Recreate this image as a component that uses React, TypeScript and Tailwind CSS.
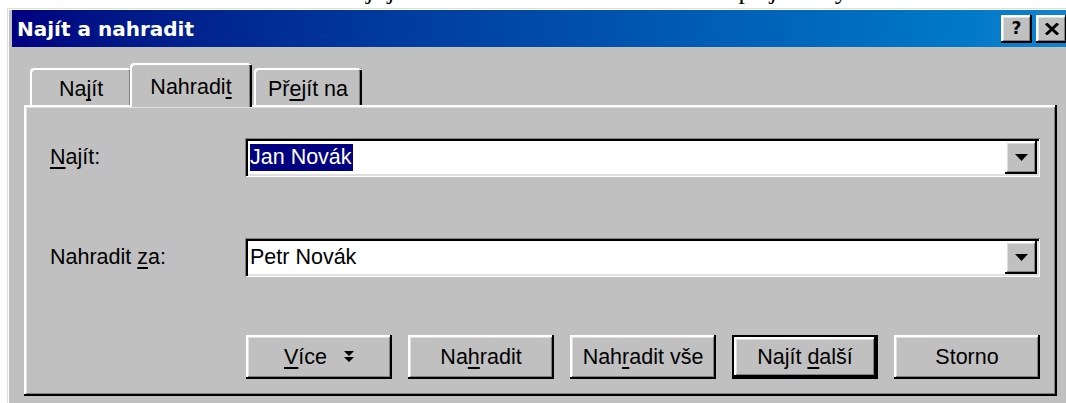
import React from "react";

// Win98-style bevels (scaled up, so edges are ~2px)
const raised =
  "shadow-[inset_-2px_-2px_#000,inset_2px_2px_#fff,inset_-3px_-3px_#808080,inset_3px_3px_#dfdfdf]";
const sunken =
  "shadow-[inset_1px_1px_#808080,inset_-1px_-1px_#fff,inset_3px_3px_#000,inset_-3px_-3px_#dfdfdf]";

function Key({ children }: { children: React.ReactNode }) {
  return (
    <u className="underline decoration-[1.5px] underline-offset-[3px] [text-decoration-skip-ink:none]">{children}</u>
  );
}

function Combo({ children }: { children: React.ReactNode }) {
  return (
    <div className={`flex w-[795px] h-[39px] bg-white p-[3px] ${sunken}`}>
      <div className="flex-1 flex items-center pl-[2px] leading-[27px]">{children}</div>
      <div className={`w-[32px] h-[33px] bg-[#c0c0c0] flex items-center justify-center ${raised}`}>
        <svg width="13" height="7" viewBox="0 0 13 7">
          <path d="M0 0h13L6.5 7z" fill="#000" />
        </svg>
      </div>
    </div>
  );
}

function Btn({ children, def }: { children: React.ReactNode; def?: boolean }) {
  return (
    <button
      className={`w-[146px] h-[44px] bg-[#c0c0c0] flex items-center justify-center text-black ${raised} ${
        def ? "border-2 border-black" : ""
      }`}
    >
      {children}
    </button>
  );
}

function Tab({ children, active, className }: { children: React.ReactNode; active?: boolean; className: string }) {
  return (
    <div
      className={`bg-[#c0c0c0] rounded-t-[4px] flex justify-center shadow-[inset_2px_2px_#fff,inset_-2px_0_#000,inset_-3px_0_#808080] ${
        active ? "relative z-10 h-[44px] mb-[-2px] pt-[13px]" : "h-[37px] pt-[10px]"
      } ${className}`}
    >
      <span className="leading-[22px]">{children}</span>
    </div>
  );
}

export default function App() {
  return (
    <div className="w-[1066px] h-[403px] overflow-hidden bg-white text-[21.5px] text-black font-['Liberation_Sans',Arial,sans-serif]">
      {/* tail of the document line above the dialog */}
      <div className="h-[8px] overflow-hidden">
        <div className="flex -mt-[22px] text-[26px] leading-none font-['Liberation_Serif',serif]">
          <span className="ml-[366px]">j</span>
          <span className="ml-[14px]">j</span>
          <span className="ml-[344px]">p</span>
          <span className="ml-[18px]">j</span>
          <span className="ml-[58px]">y</span>
        </div>
      </div>

      <div className="ml-[7px] w-[1075px] border-l border-t border-[#dfdfdf] bg-[#c0c0c0]">
        <div className="border-l border-t border-white pl-[3px] h-[400px]">
          {/* title bar */}
          <div className="w-[1058px] h-[37px] flex items-center justify-between pl-[5px] pr-[3px] bg-linear-to-r from-[#000080] to-[#1084d0]">
            <span className="text-white text-[20px] font-bold font-['DejaVu_Sans',sans-serif]">Najít a nahradit</span>
            <div className="flex gap-[4px]">
              <div className={`w-[31px] h-[28px] bg-[#c0c0c0] flex items-center justify-center ${raised}`}>
                <span className="text-[17px] font-bold leading-none font-['DejaVu_Sans',sans-serif]">?</span>
              </div>
              <div className={`w-[31px] h-[28px] bg-[#c0c0c0] flex items-center justify-center ${raised}`}>
                <svg width="14" height="12" viewBox="0 0 14 12">
                  <path d="M1 0.5L13 11.5M13 0.5L1 11.5" stroke="#000" strokeWidth="3" />
                </svg>
              </div>
            </div>
          </div>

          {/* tabs */}
          <div className="flex items-end h-[42px] mt-[16px] ml-[18px]">
            <Tab className="w-[102px]">
              Na<Key>j</Key>ít
            </Tab>
            <Tab active className="w-[122px] ml-[-2px]">
              Nahradi<Key>t</Key>
            </Tab>
            <Tab className="w-[108px] ml-[2px]">
              Př<Key>e</Key>jít na
            </Tab>
          </div>

          {/* tab page */}
          <div className={`ml-[12px] w-[1033px] h-[291px] pt-[33px] ${raised}`}>
            <div className="flex items-center leading-[27px]">
              <span className="w-[221px] pl-[26px]">
                <Key>N</Key>ajít:
              </span>
              <Combo>
                <span className="inline-block h-[27px] bg-[#000080] text-white pr-[1px]">Jan Novák</span>
              </Combo>
            </div>
            <div className="flex items-center leading-[27px] mt-[61px]">
              <span className="w-[221px] pl-[26px]">
                Nahradit <Key>z</Key>a:
              </span>
              <Combo>
                <span>Petr Novák</span>
              </Combo>
            </div>
            <div className="flex gap-[16px] ml-[222px] mt-[58px]">
              <Btn>
                <span>
                  <Key>V</Key>íce
                </span>
                <svg className="ml-[17px]" width="10" height="12" viewBox="0 0 10 12">
                  <path d="M0 0h10L5 5z M0 6h10L5 11z" fill="#000" />
                </svg>
              </Btn>
              <Btn>
                <span>
                  Na<Key>h</Key>radit
                </span>
              </Btn>
              <Btn>
                <span>
                  Nah<Key>r</Key>adit vše
                </span>
              </Btn>
              <Btn def>
                <span>
                  Najít <Key>d</Key>alší
                </span>
              </Btn>
              <Btn>
                <span>Storno</span>
              </Btn>
            </div>
          </div>
        </div>
      </div>
    </div>
  );
}
